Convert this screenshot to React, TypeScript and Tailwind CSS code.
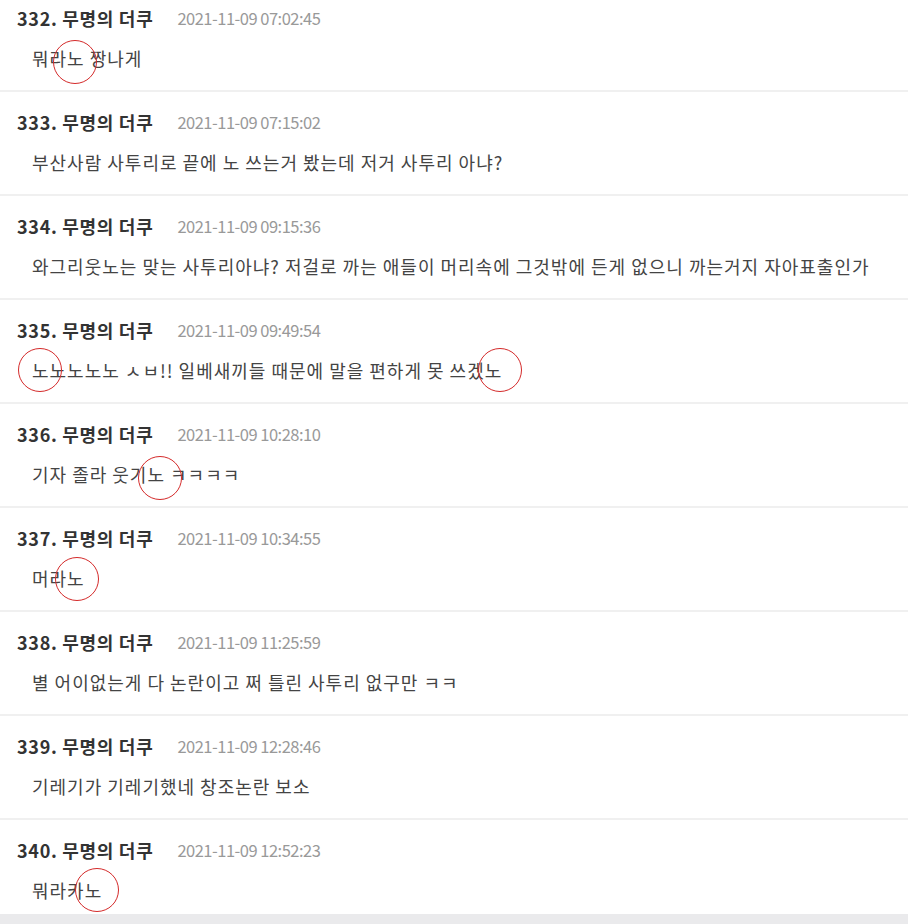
import React from "react";

interface Mark {
  left: number;
  top: number;
}

interface Comment {
  no: number;
  date: string;
  text: string;
  marks?: Mark[];
}

const comments: Comment[] = [
  { no: 332, date: "2021-11-09 07:02:45", text: "뭐라노 짱나게", marks: [{ left: 53, top: -6 }] },
  { no: 333, date: "2021-11-09 07:15:02", text: "부산사람 사투리로 끝에 노 쓰는거 봤는데 저거 사투리 아냐?" },
  {
    no: 334,
    date: "2021-11-09 09:15:36",
    text: "와그리웃노는 맞는 사투리아냐? 저걸로 까는 애들이 머리속에 그것밖에 든게 없으니 까는거지 자아표출인가",
  },
  {
    no: 335,
    date: "2021-11-09 09:49:54",
    text: "노노노노노 ㅅㅂ!! 일베새끼들 때문에 말을 편하게 못 쓰겠노",
    marks: [
      { left: 18, top: -10 },
      { left: 478, top: -10 },
    ],
  },
  { no: 336, date: "2021-11-09 10:28:10", text: "기자 졸라 웃기노 ㅋㅋㅋㅋ", marks: [{ left: 138, top: -6 }] },
  { no: 337, date: "2021-11-09 10:34:55", text: "머라노", marks: [{ left: 55, top: -9 }] },
  { no: 338, date: "2021-11-09 11:25:59", text: "별 어이없는게 다 논란이고 쩌 틀린 사투리 없구만 ㅋㅋ" },
  { no: 339, date: "2021-11-09 12:28:46", text: "기레기가 기레기했네 창조논란 보소" },
  { no: 340, date: "2021-11-09 12:52:23", text: "뭐라카노", marks: [{ left: 75, top: -10 }] },
];

const font = { fontFamily: '"Noto Sans CJK KR", "Noto Sans", sans-serif' };

const CommentRow = ({ c, last }: { c: Comment; last: boolean }) => (
  <div className={last ? "pt-[19px] pb-[12px]" : "pt-[19px] pb-[20px] border-b-2 border-[#f0f0f0]"}>
    <div className="flex items-center h-[22px] pl-[17px]">
      <span className="text-[18px] font-bold text-[#333] tracking-[0.7px]">
        {c.no}. 무명의 더쿠
      </span>
      <span className="ml-[24px] text-[16.5px] tracking-[-0.5px] text-[#999]">{c.date}</span>
    </div>
    <div className="relative mt-[17px] h-[24px] flex items-center pl-[32px] text-[18px] tracking-[1px] text-[#444] whitespace-nowrap">
      {c.text}
      {c.marks?.map((m, i) => (
        <span
          key={i}
          className="absolute w-[44px] h-[44px] rounded-full border border-[#d42a2a]"
          style={{ left: m.left, top: m.top }}
        />
      ))}
    </div>
  </div>
);

export default function App() {
  return (
    <div className="min-h-screen bg-[#eaeaec] overflow-hidden" style={font}>
      <div className="bg-white -mt-[12px]">
        {comments.map((c, i) => (
          <CommentRow key={c.no} c={c} last={i === comments.length - 1} />
        ))}
      </div>
    </div>
  );
}
